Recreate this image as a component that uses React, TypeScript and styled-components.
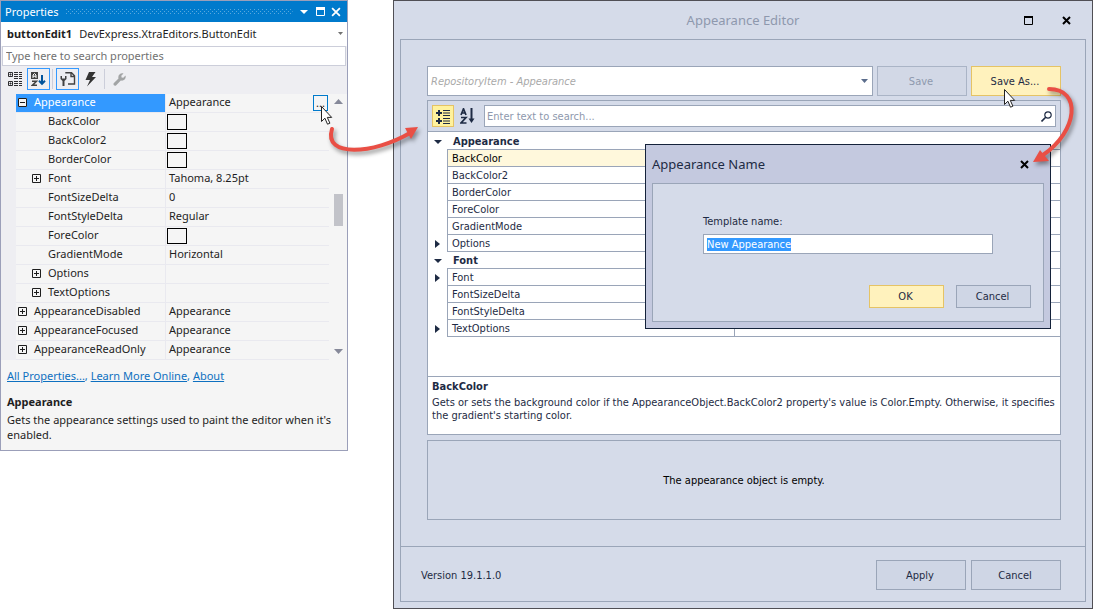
import React, { useEffect, useRef } from "react";
import styled, { createGlobalStyle } from "styled-components";

const GlobalStyle = createGlobalStyle`
  *, *::before, *::after { box-sizing: border-box; }
  body { margin: 0; background: #fff; }
  button, input, select { font: inherit; margin: 0; border-radius: 0; }
  svg { display: block; flex: none; }
`;

const line = "#9aa5b8";
const ink = "#1e2b44";

const Page = styled.main`
  position: relative;
  display: flex;
  align-items: flex-start;
  gap: 45px;
  padding-right: 7px;
`;

/* ---------- Properties panel ---------- */

const PropertiesPanel = styled.section`
  flex: 0 0 348px;
  min-width: 0;
  border: 1px solid #9b9fb9;
  background: #eeeef2;
  color: #1e1e1e;
  font: 11px/15px "Noto Sans", "Open Sans", sans-serif;
`;

const TitleBar = styled.header`
  display: flex;
  align-items: center;
  height: 21px;
  padding: 0 3px 0 4px;
  background: #007acc;
  color: #fff;
`;

const PanelTitle = styled.h2`
  margin: 0 8px 0 0;
  font-size: 11px;
  font-weight: 400;
`;

const Grip = styled.svg`
  flex: 1 1 0;
  width: 0;
  min-width: 0;
  height: 5px;
  margin-right: 3px;
`;

const TitleButton = styled.button`
  display: grid;
  place-items: center;
  width: 16px;
  height: 17px;
  padding: 0;
  border: 0;
  background: transparent;
  color: #fff;
`;

const ObjectPicker = styled.button`
  display: flex;
  align-items: center;
  gap: 7px;
  width: 100%;
  height: 24px;
  padding: 0 4px 2px 6px;
  border: 0;
  background: #fff;
  color: #1e1e1e;
  text-align: left;

  svg { margin-left: auto; }
`;

const PropertySearch = styled.input`
  display: block;
  width: calc(100% - 2px);
  height: 20px;
  margin: 0 1px;
  padding: 0 3px 2px;
  border: 1px solid #ccceda;
  background: #fff;
  color: #1e1e1e;
  outline: none;

  &::placeholder { color: #717171; opacity: 1; }
`;

const Tools = styled.div`
  display: flex;
  align-items: flex-start;
  height: 28px;
  padding: 2px 3px 0;
`;

const Tool = styled.button<{ $on?: boolean }>`
  display: grid;
  place-items: center;
  width: 23px;
  height: 22px;
  padding: 0;
  border: 1px solid ${(p) => (p.$on ? "#3399ff" : "transparent")};
  background: transparent;
  color: #2d2d30;

  &:disabled { color: #a2a4a5; }
`;

const ToolDivider = styled.span`
  width: 1px;
  height: 20px;
  margin: 1px 3px 0 2px;
  background: #ccceda;
`;

const GridArea = styled.div`
  display: flex;
  margin-left: 15px;
  background: #f5f5f5;
`;

const PropertyTable = styled.table`
  flex: 1;
  table-layout: fixed;
  border-spacing: 0;

  td, th {
    height: 19px;
    padding: 0;
    border-bottom: 1px solid #e9e9ef;
    font-weight: 400;
    line-height: 16px;
    text-align: left;
    white-space: nowrap;
  }
  th { width: 149px; }
  td { border-left: 1px solid #e9e9ef; padding-left: 3px; }
`;

const NameCell = styled.th<{ $selected?: boolean }>`
  background: ${(p) => (p.$selected ? "#3399ff" : "transparent")};
  color: ${(p) => (p.$selected ? "#fff" : "inherit")};
`;

const NameContent = styled.div<{ $level: number }>`
  display: grid;
  grid-template-columns: 9px 1fr;
  align-items: start;
  column-gap: 7px;
  height: 18px;
  padding-left: ${(p) => 2 + p.$level * 14}px;
`;

const Expander = styled.button`
  display: block;
  width: 9px;
  height: 9px;
  margin-top: 4px;
  padding: 0;
  border: 0;
  background: #fff;
`;

const Value = styled.div`
  display: flex;
  align-items: flex-start;
  justify-content: space-between;
  height: 18px;
`;

const Swatch = styled.span`
  width: 20px;
  height: 16px;
  margin: 1px 0 0 -2px;
  border: 1px solid #000;
`;

const MoreButton = styled.button`
  width: 15px;
  height: 16px;
  margin: 1px 1px 0 0;
  padding: 0;
  border: 1px solid #007acc;
  background: #f5f5f5;
  color: #1e1e1e;
  line-height: 10px;
`;

const ScrollBar = styled.div`
  display: flex;
  flex-direction: column;
  align-items: center;
  width: 18px;
  padding: 5px 0 6px;
`;

const ScrollThumb = styled.span`
  width: 9px;
  height: 32px;
  margin: 90px 0 auto;
  background: #c2c3c9;
`;

const PanelFooter = styled.footer`
  padding: 8px 6px 8px;
  background: #f5f5f5;

  h3 { margin: 11px 0 3px; font-size: 11px; }
  p { margin: 0; }
`;

const Links = styled.nav`
  color: #0e70c0;
  a { color: #0e70c0; }
`;

/* ---------- Appearance editor ---------- */

const EditorWindow = styled.section`
  position: relative;
  flex: 1;
  min-width: 0;
  padding: 0 6px 6px;
  border: 1px solid #504f55;
  background: #d5dbe9;
  color: ${ink};
  font: 11px/13px "DejaVu Sans Condensed", "Noto Sans", sans-serif;
`;

const EditorCaption = styled.header`
  display: grid;
  grid-template-columns: 1fr auto 1fr;
  align-items: center;
  height: 38px;

  h1 {
    margin: 0;
    color: #8e98ad;
    font: 13px/18px "Noto Sans", sans-serif;
  }
`;

const CaptionButtons = styled.div`
  grid-column: 3;
  display: flex;
  justify-content: flex-end;
  gap: 22px;
  padding-right: 12px;
`;

const CaptionButton = styled.button`
  display: grid;
  place-items: center;
  width: 16px;
  height: 16px;
  padding: 0;
  border: 0;
  background: transparent;
`;

const EditorBody = styled.div`
  border: 1px solid ${line};
`;

const EditorContent = styled.div`
  display: flex;
  flex-direction: column;
  padding: 26px 24px 26px 26px;
`;

const TemplateRow = styled.div`
  display: flex;
  gap: 4px;
  margin-bottom: 4px;
`;

const SelectBox = styled.div`
  position: relative;
  flex: 1;

  svg { position: absolute; right: 5px; top: 13px; pointer-events: none; }
`;

const TemplateSelect = styled.select`
  display: block;
  appearance: none;
  width: 100%;
  height: 30px;
  padding: 0 3px;
  border: 1px solid ${line};
  background: #fff;
  color: #a9a9a9;
  font-style: italic;
`;

const PushButton = styled.button<{ $accent?: boolean; $small?: boolean }>`
  width: ${(p) => (p.$small ? 75 : 90)}px;
  height: ${(p) => (p.$small ? 23 : 30)}px;
  padding: 0 2px 0 0;
  border: 1px solid ${(p) => (p.$accent ? "#e5c365" : line)};
  background: ${(p) => (p.$accent ? "#fff2bd" : "#cfd6e5")};
  color: ${ink};

  &:disabled { border-color: #aab4c6; background: #d2d8e6; color: #8e98ad; }
`;

const Inspector = styled.div`
  position: relative;
  margin-bottom: 5px;
  border: 1px solid ${line};
  background: #fff;
`;

const InspectorBar = styled.div`
  display: flex;
  align-items: center;
  height: 31px;
  padding: 0 4px;
  border-bottom: 1px solid ${line};
  background: #d5dbe9;
`;

const ViewButton = styled.button<{ $on?: boolean }>`
  display: grid;
  place-items: center;
  width: 22px;
  height: 22px;
  margin-right: 2px;
  padding: 0;
  border: 1px solid ${(p) => (p.$on ? "#e5c365" : "transparent")};
  background: ${(p) => (p.$on ? "#fff29d" : "transparent")};
`;

const SearchBox = styled.label`
  display: flex;
  align-items: center;
  flex: 1;
  height: 22px;
  margin-left: 4px;
  padding: 0 3px 0 2px;
  border: 1px solid ${line};
  background: #fff;

  input {
    flex: 1;
    min-width: 0;
    padding: 0;
    border: 0;
    outline: none;
    background: transparent;
    color: ${ink};
  }
  input::placeholder { color: #8e98ad; opacity: 1; }
`;

const InspectorTable = styled.table`
  width: 100%;
  margin: 1px 0 39px;
  table-layout: fixed;
  border-spacing: 0;

  th, td {
    height: 17px;
    padding: 0;
    font-weight: 400;
    line-height: 13px;
    text-align: left;
  }
`;

const ArrowCell = styled.td`
  svg { margin: 0 auto; }
`;

const CategoryCell = styled.th`
  && { padding-left: 6px; border-bottom: 1px solid ${line}; font-weight: 700; }
`;

const FieldName = styled.th<{ $active?: boolean }>`
  && {
    padding-left: 4px;
    border-left: 1px solid ${line};
    border-bottom: 1px solid ${line};
    background: ${(p) => (p.$active ? "#fff8dc" : "#fff")};
    color: ${(p) => (p.$active ? "#000" : ink)};
  }
`;

const FieldValue = styled.td`
  border-left: 1px solid ${line};
  border-bottom: 1px solid ${line};
`;

const Description = styled.div`
  height: 58px;
  padding: 3px 2px 3px 4px;
  border-top: 1px solid ${line};

  h3 { margin: 0 0 3px; font-size: 11px; }
  p { margin: 0; }
`;

const Preview = styled.div`
  display: grid;
  place-items: center;
  height: 80px;
  border: 1px solid ${line};
  color: #000;
`;

const EditorFooter = styled.footer`
  display: flex;
  align-items: center;
  gap: 5px;
  padding: 13px 24px 11px 20px;
  border-top: 1px solid ${line};

  span { margin-right: auto; }
`;

/* ---------- Appearance Name dialog ---------- */

const Dialog = styled.form`
  position: absolute;
  top: 43px;
  right: 9px;
  width: 406px;
  padding: 0 6px 6px;
  border: 1px solid #14223a;
  background: #c4c9df;
`;

const DialogCaption = styled.header`
  display: flex;
  align-items: center;
  justify-content: space-between;
  height: 38px;
  padding-right: 12px;

  h2 { margin: 0; font: 13px/18px "Noto Sans", sans-serif; }
`;

const DialogBody = styled.div`
  padding: 31px 12px 13px 50px;
  border: 1px solid ${line};
  background: #d5dbe9;

  label { display: block; margin-bottom: 6px; }
`;

const NameInput = styled.input`
  display: block;
  width: 290px;
  height: 20px;
  padding: 0 3px;
  border: 1px solid ${line};
  background: #fff;
  color: ${ink};
  outline: none;

  &::selection { background: #3399ff; color: #fff; }
`;

const DialogActions = styled.div`
  display: flex;
  justify-content: flex-end;
  gap: 12px;
  margin-top: 31px;
`;

/* ---------- Annotations ---------- */

const EditArrow = styled.svg`
  position: absolute;
  left: 320px;
  top: 120px;
  filter: drop-shadow(2px 3px 2px rgba(0, 0, 0, 0.4));
  pointer-events: none;
`;

const SaveArrow = styled.svg`
  position: absolute;
  right: 2px;
  top: 79px;
  filter: drop-shadow(2px 3px 2px rgba(0, 0, 0, 0.4));
  pointer-events: none;
`;

const Pointer = styled.svg<{ $right?: boolean }>`
  position: absolute;
  ${(p) => (p.$right ? "right: 75px; top: 87px;" : "left: 320px; top: 105px;")}
  pointer-events: none;
`;

const PointerShape = ({ right }: { right?: boolean }) => (
  <Pointer $right={right} width="14" height="21" viewBox="0 0 14 21" aria-hidden="true">
    <path d="M1.5 1.5v15l3.4-3.3 2.6 6 2.4-1-2.6-5.8h4.4z" fill="#fff" stroke="#222" strokeWidth="1" />
  </Pointer>
);

const Cross = ({ size = 9, width = 2, color = "#000" }) => (
  <svg width={size} height={size} viewBox="0 0 9 9">
    <path d="M1 1l7 7M8 1l-7 7" stroke={color} strokeWidth={width} />
  </svg>
);

const Triangle = ({ width = 9, height = 5, up = false, color = ink }) => (
  <svg width={width} height={height} viewBox="0 0 10 5" preserveAspectRatio="none">
    <path d={up ? "M0 5h10L5 0z" : "M0 0h10L5 5z"} fill={color} />
  </svg>
);

const RightTriangle = () => (
  <svg width="5" height="8" viewBox="0 0 5 8"><path d="M0 0v8l5-4z" fill={ink} /></svg>
);

type Property = { name: string; level?: number; sign?: "+" | "-"; value?: string; color?: boolean; more?: boolean };

const properties: Property[] = [
  { name: "Appearance", sign: "-", value: "Appearance", more: true },
  { name: "BackColor", level: 1, color: true },
  { name: "BackColor2", level: 1, color: true },
  { name: "BorderColor", level: 1, color: true },
  { name: "Font", level: 1, sign: "+", value: "Tahoma, 8.25pt" },
  { name: "FontSizeDelta", level: 1, value: "0" },
  { name: "FontStyleDelta", level: 1, value: "Regular" },
  { name: "ForeColor", level: 1, color: true },
  { name: "GradientMode", level: 1, value: "Horizontal" },
  { name: "Options", level: 1, sign: "+" },
  { name: "TextOptions", level: 1, sign: "+" },
  { name: "AppearanceDisabled", sign: "+", value: "Appearance" },
  { name: "AppearanceFocused", sign: "+", value: "Appearance" },
  { name: "AppearanceReadOnly", sign: "+", value: "Appearance" },
];

const groups = [
  {
    title: "Appearance",
    fields: ["BackColor", "BackColor2", "BorderColor", "ForeColor", "GradientMode", "Options"],
  },
  { title: "Font", fields: ["Font", "FontSizeDelta", "FontStyleDelta", "TextOptions"] },
];

const expandable = ["Options", "Font", "TextOptions"];

const Properties = () => (
  <PropertiesPanel aria-label="Properties">
    <TitleBar>
      <PanelTitle>Properties</PanelTitle>
      <Grip aria-hidden="true">
        <defs>
          <pattern id="grip" width="4" height="4" patternUnits="userSpaceOnUse">
            <path d="M0 0h1v1H0zM2 2h1v1H2z" fill="#59a8de" />
          </pattern>
        </defs>
        <rect width="100%" height="5" fill="url(#grip)" />
      </Grip>
      <TitleButton aria-label="Window position"><Triangle width={8} height={4} color="#fff" /></TitleButton>
      <TitleButton aria-label="Maximize">
        <svg width="9" height="9"><path d="M.5 1v7.500h8V1" fill="none" stroke="#fff" /><path d="M0 0h9v3H0z" fill="#fff" /></svg>
      </TitleButton>
      <TitleButton aria-label="Close"><Cross size={10} width={1.6} color="#fff" /></TitleButton>
    </TitleBar>
    <ObjectPicker aria-haspopup="listbox">
      <b>buttonEdit1</b>
      <span>DevExpress.XtraEditors.ButtonEdit</span>
      <Triangle width={5} height={3} color="#717171" />
    </ObjectPicker>
    <PropertySearch type="text" placeholder="Type here to search properties" aria-label="Search properties" />
    <Tools>
      <Tool aria-label="Categorized">
        <svg width="15" height="14" viewBox="0 0 15 14">
          <path d="M.5.500h4v4h-4zM.5 9.500h4v4h-4zM1.500 2.500h2M2.500 1.500v2M1.500 11.500h2M2.500 10.500v2" fill="none" stroke="currentColor" />
          <path d="M6 .5h4M11 .5h3M6 2.500h4M11 2.500h3M6 4.500h4M11 4.500h3M6 6.500h4M11 6.500h3M6 9.500h4M11 9.500h3M6 11.500h4M11 11.500h3M6 13.500h4M11 13.500h3" stroke="currentColor" />
        </svg>
      </Tool>
      <Tool $on aria-label="Alphabetical">
        <svg width="15" height="15" viewBox="0 0 15 15">
          <path d="M0 0h7v7H0z" fill="#424242" />
          <path d="M2 6V3l1.500-1.500L5 3v3M2 4.200h3" fill="none" stroke="#fff" />
          <path d="M1 9.300h4.500L1.500 13.200H6" fill="none" stroke="#424242" strokeWidth="1.500" />
          <path d="M11 3v9M8 8.800l3 3 3-3" fill="none" stroke="#00539c" strokeWidth="2" />
        </svg>
      </Tool>
      <ToolDivider />
      <Tool $on aria-label="Property pages">
        <svg width="16" height="14" viewBox="0 0 16 14">
          <path d="M6 1.500V.7h5.500l3 3V12H8M11 1v3.500h3.500" fill="none" stroke="#424242" strokeWidth="1.400" />
          <path d="M.5 4v3l2 2v5h2V9l2-2V4H5v2.500H2V4z" fill="#424242" />
        </svg>
      </Tool>
      <Tool aria-label="Events">
        <svg width="12" height="15" viewBox="0 0 12 15"><path d="M4 0h6.500L7 5h4L2 14.500 5 8H.5z" fill="#333" /></svg>
      </Tool>
      <ToolDivider />
      <Tool disabled aria-label="Settings">
        <svg width="13" height="13" viewBox="0 0 13 13">
          <path d="M10.500.500 8.300 2.700l.3 1.700 1.700.3 2.200-2.200c1 3-1.500 5.800-4.700 5L3 12.400c-1.500 1-3.200-.7-2.300-2.200L5.500 5.500C4.500 2.200 7.500-.5 10.500.500z" fill="currentColor" />
        </svg>
      </Tool>
    </Tools>
    <GridArea>
      <PropertyTable>
        <tbody>
          {properties.map((p) => (
            <tr key={p.name}>
              <NameCell scope="row" $selected={p.more}>
                <NameContent $level={p.level ?? 0}>
                  {p.sign ? (
                    <Expander aria-label={p.sign === "+" ? "Expand" : "Collapse"}>
                      <svg width="9" height="9">
                        <path d={`M.5.500h8v8h-8zM2 4.500h5${p.sign === "+" ? "M4.500 2v5" : ""}`} fill="#f5f5f5" stroke="#1e1e1e" />
                      </svg>
                    </Expander>
                  ) : (
                    <span />
                  )}
                  {p.name}
                </NameContent>
              </NameCell>
              <td>
                <Value>
                  {p.color ? <Swatch /> : p.value}
                  {p.more && <MoreButton aria-label="Edit appearance">...</MoreButton>}
                </Value>
              </td>
            </tr>
          ))}
        </tbody>
      </PropertyTable>
      <ScrollBar>
        <Triangle width={9} height={5} up color="#868999" />
        <ScrollThumb />
        <Triangle width={9} height={5} color="#868999" />
      </ScrollBar>
    </GridArea>
    <PanelFooter>
      <Links>
        <a href="#all">All Properties...</a>, <a href="#learn">Learn More Online</a>, <a href="#about">About</a>
      </Links>
      <h3>Appearance</h3>
      <p>Gets the appearance settings used to paint the editor when it's enabled.</p>
    </PanelFooter>
  </PropertiesPanel>
);

const NameDialog = () => {
  const input = useRef<HTMLInputElement>(null);
  useEffect(() => {
    input.current?.focus();
    input.current?.select();
  }, []);
  return (
    <Dialog role="dialog" aria-labelledby="dialog-title" onSubmit={(e) => e.preventDefault()}>
      <DialogCaption>
        <h2 id="dialog-title">Appearance Name</h2>
        <CaptionButton type="button" aria-label="Close"><Cross /></CaptionButton>
      </DialogCaption>
      <DialogBody>
        <label htmlFor="template-name">Template name:</label>
        <NameInput id="template-name" ref={input} defaultValue="New Appearance" />
        <DialogActions>
          <PushButton $small $accent>OK</PushButton>
          <PushButton $small type="button">Cancel</PushButton>
        </DialogActions>
      </DialogBody>
    </Dialog>
  );
};

const Editor = () => (
  <EditorWindow aria-label="Appearance Editor">
    <EditorCaption>
      <span />
      <h1>Appearance Editor</h1>
      <CaptionButtons>
        <CaptionButton aria-label="Maximize">
          <svg width="9" height="9"><path d="M.5 1v7.500h8V1" fill="none" stroke="#000" /><path d="M0 0h9v2H0z" /></svg>
        </CaptionButton>
        <CaptionButton aria-label="Close"><Cross /></CaptionButton>
      </CaptionButtons>
    </EditorCaption>
    <EditorBody>
      <EditorContent>
        <TemplateRow>
          <SelectBox>
            <TemplateSelect aria-label="Template" defaultValue="default">
              <option value="default">RepositoryItem - Appearance</option>
            </TemplateSelect>
            <Triangle width={7} height={4} color="#5b6d8c" />
          </SelectBox>
          <PushButton disabled>Save</PushButton>
          <PushButton $accent>Save As...</PushButton>
        </TemplateRow>
        <Inspector>
          <InspectorBar>
            <ViewButton $on aria-label="Categorized">
              <svg width="14" height="15" viewBox="0 0 14 15">
                <path d="M0 4h6M3 1v6M0 12h6M3 9v6" stroke={ink} strokeWidth="2" />
                <path d="M7 1.500h7M7 4h7M7 6.500h7M7 9.500h7M7 12h7M7 14.500h7" stroke={ink} strokeWidth="1" />
              </svg>
            </ViewButton>
            <ViewButton aria-label="Alphabetical">
              <svg width="15" height="16" viewBox="0 0 15 16">
                <path d="M1 7 3.500.800 6 7M1.800 5h3.400M1 9.500h5L1 15h5.500" fill="none" stroke={ink} strokeWidth="1.700" />
                <path d="M11.500 0v12" stroke={ink} strokeWidth="2" />
                <path d="M8.500 10.500h6l-3 4.500z" fill={ink} />
              </svg>
            </ViewButton>
            <SearchBox>
              <input type="text" placeholder="Enter text to search..." aria-label="Search" />
              <svg width="11" height="11" viewBox="0 0 11 11">
                <circle cx="7" cy="4" r="3.200" fill="none" stroke={ink} strokeWidth="1.200" />
                <path d="M4.700 6.300.500 10.500" stroke={ink} strokeWidth="1.600" />
              </svg>
            </SearchBox>
          </InspectorBar>
          <InspectorTable>
            <colgroup>
              <col width="19" />
              <col width="287" />
              <col />
            </colgroup>
            <tbody>
              {groups.map((g) => (
                <React.Fragment key={g.title}>
                  <tr>
                    <ArrowCell><Triangle width={8} height={4} /></ArrowCell>
                    <CategoryCell colSpan={2} scope="rowgroup">{g.title}</CategoryCell>
                  </tr>
                  {g.fields.map((f) => (
                    <tr key={f}>
                      <ArrowCell>{expandable.includes(f) && <RightTriangle />}</ArrowCell>
                      <FieldName scope="row" $active={f === "BackColor"}>{f}</FieldName>
                      <FieldValue />
                    </tr>
                  ))}
                </React.Fragment>
              ))}
            </tbody>
          </InspectorTable>
          <Description>
            <h3>BackColor</h3>
            <p>
              Gets or sets the background color if the AppearanceObject.BackColor2 property's value is Color.Empty.
              Otherwise, it specifies the gradient's starting color.
            </p>
          </Description>
          <NameDialog />
        </Inspector>
        <Preview>The appearance object is empty.</Preview>
      </EditorContent>
      <EditorFooter>
        <span>Version 19.1.1.0</span>
        <PushButton>Apply</PushButton>
        <PushButton>Cancel</PushButton>
      </EditorFooter>
    </EditorBody>
    <PointerShape right />
    <SaveArrow width="60" height="90" viewBox="0 0 60 90" aria-hidden="true">
      <path d="M19 9C52 9 48 51 13 75" fill="none" stroke="#e94f45" strokeWidth="4" strokeLinecap="round" />
      <path d="M3 82 10 70l9 11z" fill="#e94f45" />
    </SaveArrow>
  </EditorWindow>
);

export default function App() {
  return (
    <>
      <GlobalStyle />
      <Page>
        <Properties />
        <Editor />
        <EditArrow width="110" height="50" viewBox="0 0 110 50" aria-hidden="true">
          <path d="M12 9C3 38 54 34 90 13" fill="none" stroke="#e94f45" strokeWidth="4" strokeLinecap="round" />
          <path d="M98 7 85 8l6 11z" fill="#e94f45" />
        </EditArrow>
        <PointerShape />
      </Page>
    </>
  );
}
